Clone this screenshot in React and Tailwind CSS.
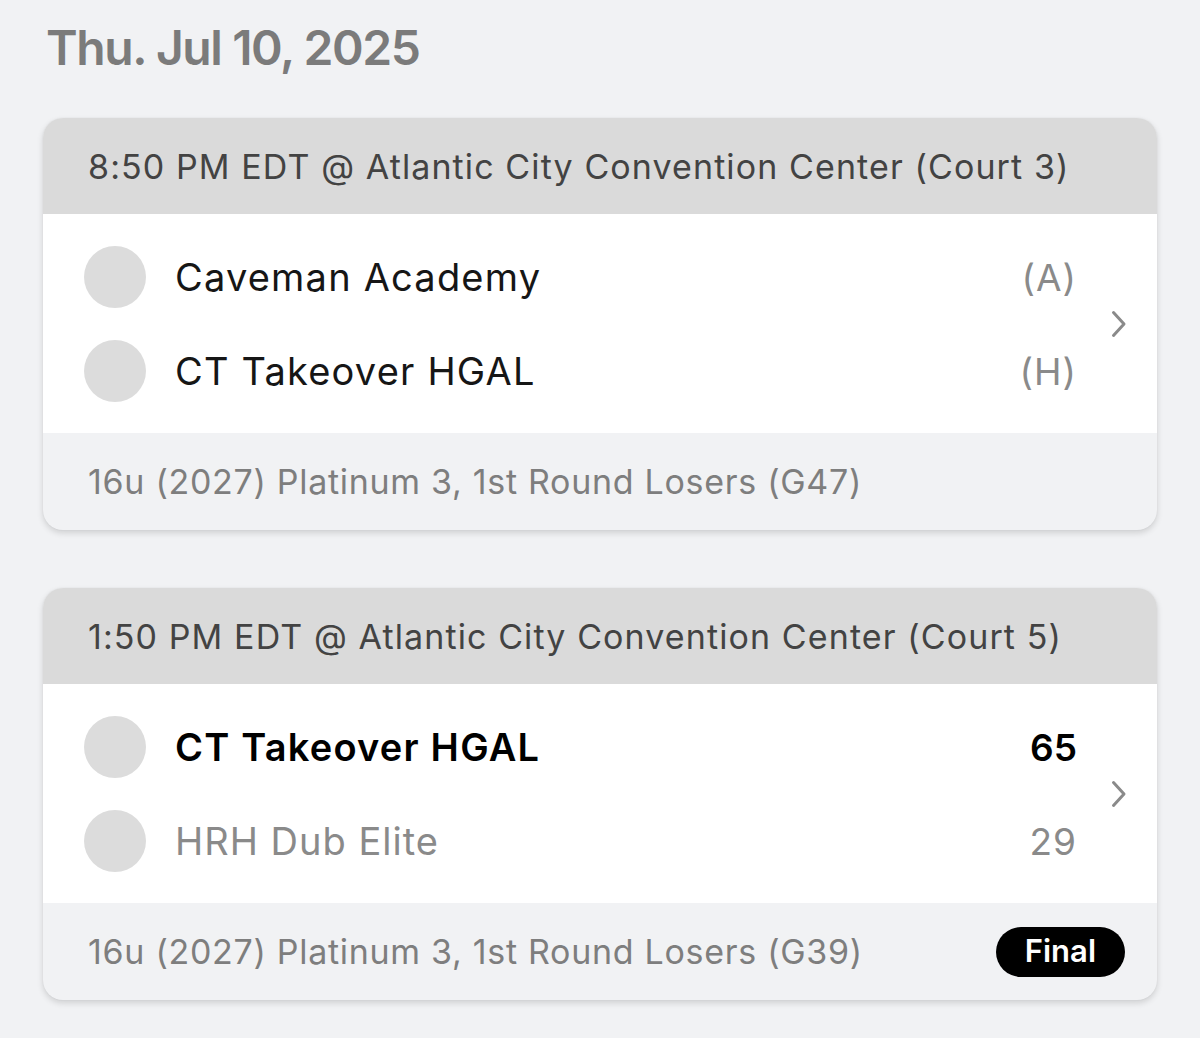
const games = [
  {
    time: '8:50 PM EDT',
    venue: 'Atlantic City Convention Center (Court 3)',
    teams: [
      { name: 'Caveman Academy', value: '(A)' },
      { name: 'CT Takeover HGAL', value: '(H)' },
    ],
    division: '16u (2027) Platinum 3, 1st Round Losers (G47)',
  },
  {
    time: '1:50 PM EDT',
    venue: 'Atlantic City Convention Center (Court 5)',
    teams: [
      { name: 'CT Takeover HGAL', value: '65', winner: true },
      { name: 'HRH Dub Elite', value: '29', loser: true },
    ],
    division: '16u (2027) Platinum 3, 1st Round Losers (G39)',
    status: 'Final',
  },
];

function Chevron() {
  return (
    <svg width="16" height="28" viewBox="0 0 16 28" fill="none">
      <path d="M2.5 2.5 L13 14 L2.5 25.5" stroke="#8a8a8a" strokeWidth="3" strokeLinecap="round" strokeLinejoin="round" />
    </svg>
  );
}

function TeamRow({ team }) {
  let nameCls = 'text-[#161616] tracking-[1.2px]';
  let valueCls = 'text-[#8a8a8a] tracking-[1px]';
  if (team.winner) {
    nameCls = 'text-black font-semibold tracking-[1.2px]';
    valueCls = 'text-black font-semibold';
  }
  if (team.loser) {
    nameCls = 'text-[#8a8a8a] tracking-[1px]';
  }
  return (
    <div className="flex h-[94px] items-center">
      <div className="h-[62px] w-[62px] shrink-0 rounded-full bg-[#dcdcdc]" />
      <div className={`ml-[29px] flex-1 text-[38px] leading-none ${nameCls}`}>{team.name}</div>
      <div className={`text-[37px] leading-none ${valueCls}`}>{team.value}</div>
    </div>
  );
}

function GameCard({ game }) {
  return (
    <div className="overflow-hidden rounded-[20px] bg-[#f1f2f4] shadow-[0_3px_6px_rgba(0,0,0,0.14),0_0_2px_rgba(0,0,0,0.06)]">
      <div className="flex h-[96px] items-center bg-[#dadada] px-[45px] text-[34px] tracking-[1.1px] text-[#434343]">
        {game.time} @ {game.venue}
      </div>
      <div className="flex items-center bg-white pb-[15px] pl-[41px] pr-[30px] pt-[16px]">
        <div className="flex-1">
          {game.teams.map((t) => (
            <TeamRow key={t.name + t.value} team={t} />
          ))}
        </div>
        <div className="ml-[34px]">
          <Chevron />
        </div>
      </div>
      <div className="flex h-[97px] items-center justify-between pl-[45px] pr-[32px]">
        <span className="text-[34px] tracking-[0.7px] text-[#7e7e7e]">{game.division}</span>
        {game.status && (
          <span className="flex h-[50px] items-center rounded-full bg-black px-[29px] text-[31px] font-semibold text-white">
            {game.status}
          </span>
        )}
      </div>
    </div>
  );
}

export default function App() {
  return (
    <div className="min-h-[1038px] bg-[#f1f2f4] px-[43px] pt-[22px] font-['Inter',sans-serif]">
      <h1 className="pl-[3px] text-[48px] font-semibold leading-[52px] tracking-[-1.4px] text-[#7b7b7b]">
        Thu. Jul 10, 2025
      </h1>
      <div className="mt-[44px] flex flex-col gap-[58px]">
        {games.map((g) => (
          <GameCard key={g.division} game={g} />
        ))}
      </div>
    </div>
  );
}
